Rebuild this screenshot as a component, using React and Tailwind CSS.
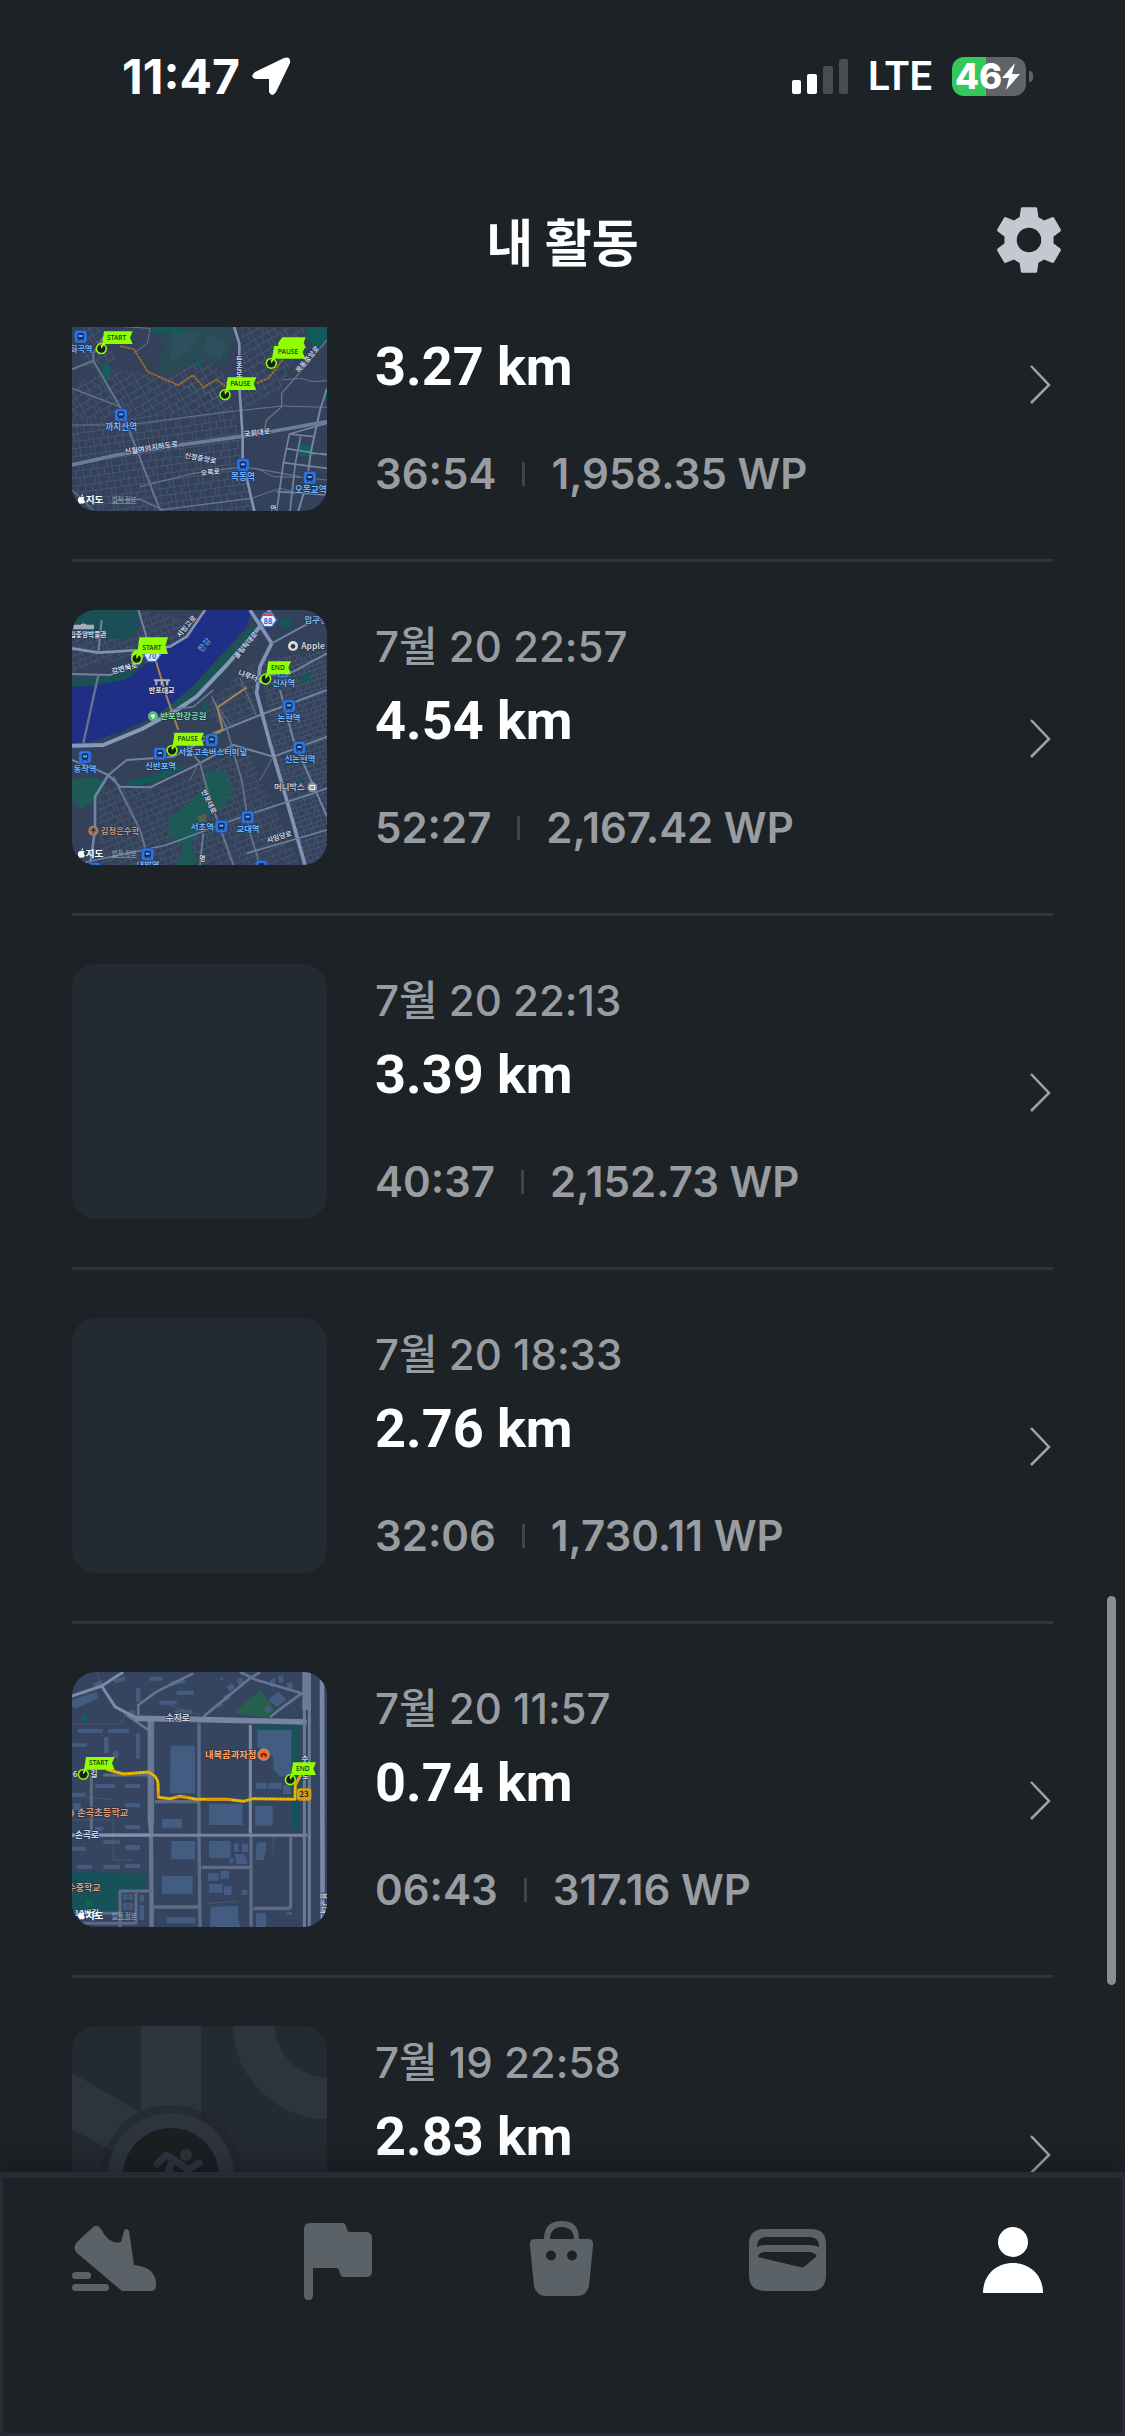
import { MdSettings } from "react-icons/md";

const MAP_FONT = '"Noto Sans CJK KR", sans-serif';

function Road({ d, w = 4, c = "#66748c" }) {
    return (
        <path
            d={d}
            fill="none"
            stroke={c}
            strokeWidth={w}
            strokeLinejoin="round"
        />
    );
}

function Label({ x, y, size = 24, fill = "#cfd9ea", rotate = 0, children }) {
    return (
        <text
            x={x}
            y={y}
            transform={`rotate(${rotate} ${x} ${y})`}
            fontSize={size}
            fontWeight="700"
            fontFamily={MAP_FONT}
            textAnchor="middle"
            fill={fill}
            stroke="#1f2b40"
            strokeWidth="3"
            paintOrder="stroke"
        >
            {children}
        </text>
    );
}

function Station({ x, y }) {
    return (
        <g transform={`translate(${x} ${y})`}>
            <rect x="-19" y="-19" width="38" height="38" rx="9" fill="#2f74dc" stroke="#1b3f86" strokeWidth="2" />
            <rect x="-10" y="-11" width="20" height="20" rx="6" fill="#12305f" />
            <rect x="-6" y="-5" width="12" height="6" fill="#6aa6f5" />
            <path d="M-8 13l4-5M8 13l-4-5" stroke="#12305f" strokeWidth="3" />
        </g>
    );
}

// The pin sits at x/y, the flag grows up and to the right of it
function Flag({ x, y, w = 88, h = 38, children }) {
    return (
        <g transform={`translate(${x} ${y})`}>
            <circle r="17" fill="#90ff00" />
            <circle r="12.5" fill="#172019" />
            <path d="M0 0L-2 -11L8 -12Z" fill="#90ff00" />
            <path
                d={`M0 0L8 ${-14 - h}H${w + 6}L${w - 2} ${-14 - h / 2}L${w + 6} -14H10Z`}
                fill="#90ff00"
            />
            <text
                x={w / 2 + 2}
                y={-27}
                fontSize="20"
                fontWeight="500"
                fontFamily='"Noto Sans", sans-serif'
                textAnchor="middle"
                fill="#17330a"
            >
                {children}
            </text>
        </g>
    );
}

function AppleMark({ x, y }) {
    return (
        <g>
            <path
                transform={`translate(${x} ${y})`}
                d="M11 6C14 3 19 4 21 7C17 10 17 15 22 18C20 24 16 27 12 24C8 27 4 24 2 19C-1 12 3 2 11 6ZM11 4C11 0 13 -2 16 -3C16 1 14 4 11 4Z"
                fill="#fff"
            />
            <text x={x + 24} y={y + 23} fontSize="29" fontWeight="700" fontFamily={MAP_FONT} fill="#fff">
                지도
            </text>
            <text
                x={x + 102}
                y={y + 21}
                fontSize="19"
                fontFamily={MAP_FONT}
                fill="#98a3b5"
                textDecoration="underline"
            >
                법적 정보
            </text>
        </g>
    );
}

function Streets({ id, size, angle, color = "#505f78" }) {
    return (
        <pattern
            id={id}
            width={size}
            height={size}
            patternUnits="userSpaceOnUse"
            patternTransform={`rotate(${angle})`}
        >
            <path
                d={`M0 1H${size}M1 0V${size}M${size / 2} 0V${size / 2}M0 ${size / 2}H${size}M${size * 0.75} ${size / 2}V${size}`}
                stroke={color}
                strokeWidth="2"
                fill="none"
            />
        </pattern>
    );
}

function MokdongMap() {
    return (
        <svg viewBox="36 -162 765 765" className="size-full">
            <defs>
                <Streets id="mokdongA" size={44} angle={-8} />
                <Streets id="mokdongB" size={46} angle={-30} />
            </defs>
            <rect x="36" y="-162" width="765" height="765" fill="#33425a" />
            <path d="M36 330L520 300L540 380L575 603H36Z" fill="url(#mokdongA)" />
            <path d="M36 220L160 180L270 190L500 240L520 300L36 330Z" fill="url(#mokdongB)" />
            <path d="M545 50H740L660 240L545 300Z" fill="url(#mokdongB)" />
            <path d="M330 200L430 140L520 220L510 290L380 240Z" fill="url(#mokdongB)" />
            <path d="M60 50H120L170 150L80 180Z" fill="url(#mokdongB)" />
            <path d="M300 50H500L520 90L500 160L430 150L330 190L290 195L310 120Z" fill="#294b56" />
            <path d="M340 70L420 60L390 120L330 160ZM440 70L500 100L480 150L430 130Z" fill="#2f5560" opacity="0.6" />
            <path d="M275 52H370L375 68L350 72L320 62L280 76ZM740 50H801V90L770 120L740 85Z" fill="#125a58" />
            <path d="M126 160L152 165L150 205L130 208ZM406 155L420 152L424 165L408 168ZM720 402L756 408L752 442L718 438ZM790 245L801 240V270L792 266Z" fill="#12605a" />
            <Road d="M36 178L100 152L100 130L130 80" w={6} />
            <Road d="M100 152L180 290L300 600" w={6} />
            <Road d="M36 345L200 345L480 308L665 288L801 292" w={3} />
            <Road d="M190 50L270 55L262 100L222 130" w={3} />
            <Road d="M801 90L700 210L665 250V290L620 330L610 370" w={4} />
            <Road d="M665 210L720 205L760 215L801 212" w={3} />
            <Road d="M36 235L180 290M300 600L575 565M36 540L100 600M170 570L240 568L310 600" w={4} />
            <Road d="M240 530L400 490L550 470L620 482L720 500" w={4} />
            <Road d="M575 565L660 535L710 548M600 480L640 500L720 502L801 510" w={3} />
            <Road d="M801 235L780 300L752 430L740 520L715 603" w={6} c="#7484a0" />
            <Road d="M801 340L688 372L670 460L650 603M688 372L760 380M676 415L800 435M670 458L801 475M722 380L706 460L690 603M756 430L801 432M650 545L801 555" w={5} c="#7484a0" />
            <Road d="M36 465L170 435L360 405L540 380L660 360L801 335" w={11} c="#6b7c9a" />
            <Road d="M522 50L538 100V230L548 380V450L575 570L583 603" w={8} c="#7f92b3" />
            <path
                d="M180 108L222 118L262 184L355 226L398 196L432 232L470 208L495 228M590 220L625 205L668 150"
                fill="none"
                stroke="#a66d24"
                strokeWidth="5"
                strokeDasharray="9 2"
            />
            <Station x={62} y={80} />
            <Station x={183} y={315} />
            <Station x={549} y={465} />
            <Station x={749} y={503} />
            <Label x={64} y={125} fill="#70b5ff">화곡역</Label>
            <Label x={184} y={360} size={26} fill="#70b5ff">까치산역</Label>
            <Label x={549} y={510} size={26} fill="#70b5ff">목동역</Label>
            <Label x={752} y={549} size={26} fill="#70b5ff">오목교역</Label>
            <Label x={275} y={421} size={22} rotate={-9}>신월여의지하도로</Label>
            <Label x={420} y={452} size={21} rotate={11}>신정중앙로</Label>
            <Label x={452} y={494} size={21} rotate={-6}>오목로</Label>
            <Label x={592} y={376} size={22} rotate={-7}>국회대로</Label>
            <Label x={538} y={155} size={21}>등</Label>
            <Label x={538} y={176} size={21}>촌</Label>
            <Label x={538} y={197} size={21}>로</Label>
            <Label x={748} y={153} size={21} rotate={-50}>목동중앙로</Label>
            <Label x={640} y={603} size={20}>안</Label>
            <path d="M655 98L667 82H737L731 98L738 115H655Z" fill="#90ff00" />
            <Flag x={124} y={116}>START</Flag>
            <Flag x={495} y={254}>PAUSE</Flag>
            <Flag x={634} y={160} w={96}>PAUSE</Flag>
            <AppleMark x={53} y={556} />
        </svg>
    );
}

function BanpoMap() {
    return (
        <svg viewBox="36 30 765 765" className="size-full">
            <defs>
                <Streets id="banpoA" size={38} angle={-22} color="#4b5b73" />
                <Streets id="banpoB" size={30} angle={-18} color="#4d5c75" />
            </defs>
            <rect x="36" y="30" width="765" height="765" fill="#33425a" />
            <path d="M36 30H240L380 60L340 130L36 220Z" fill="url(#banpoA)" />
            <path d="M110 560L330 560L420 500L560 440L720 795H120Z" fill="url(#banpoA)" />
            <path d="M600 180L801 150V795H730L640 450Z" fill="url(#banpoB)" />
            <path d="M420 330L590 180L590 350L500 390Z" fill="url(#banpoA)" />
            <path d="M36 30H235L240 85L200 120L100 110L60 70L36 75ZM36 235L150 225L250 200L200 240L100 260L36 262Z" fill="#1b4f56" />
            <path d="M440 30H575L560 80L480 170L400 260L300 340L180 400L100 425L36 430V260L100 258L200 238L300 160L380 110Z" fill="#1f2f86" />
            <path d="M575 75L600 90L500 210L420 290L340 330L260 360L150 410L80 428L200 390L300 340L400 258L480 168Z" fill="#1d5354" />
            <path d="M36 540L90 530L140 545L110 600L60 628L36 600ZM440 515L490 510L520 570L500 610L430 660L395 730L410 795H350L370 740L320 700L330 650L400 600L430 560Z" fill="#1e5a55" />
            <path d="M200 545L270 530L360 495L380 500L280 548L190 560ZM425 320L445 300L440 335ZM720 235L750 215L755 235L725 250ZM660 60L690 55L695 80L665 80ZM710 540L728 535L725 555ZM535 690L580 670L570 690L540 705Z" fill="#125a58" />
            <path d="M410 650L440 640L440 660L420 668Z" fill="#53604f" />
            <Road d="M36 145L115 158L240 150L330 140L380 110L435 30" w={8} c="#8292b0" />
            <Road d="M36 222L150 225L240 190L265 130L235 30M125 60L115 158" w={6} c="#72829f" />
            <Road d="M115 225L70 430" w={7} />
            <Road d="M36 437L130 435L250 385L350 330L410 290L500 195L600 80L630 30" w={12} c="#8799b8" />
            <Road d="M330 330L400 320L460 270" w={5} />
            <Road d="M36 480L100 505L145 525L200 480L340 470L500 385L600 345L801 270" w={6} c="#7282a0" />
            <Road d="M145 525L105 590V690L90 795" w={8} c="#7282a0" />
            <Road d="M145 525L180 560L270 562L400 500L520 435L640 470L801 410" w={6} c="#7282a0" />
            <Road d="M160 530L240 690L270 795M340 400L370 420L420 490L450 600L520 795" w={6} />
            <Road d="M570 30L635 130L600 200L590 280L630 430L680 600L735 795" w={11} c="#8193b5" />
            <Road d="M635 130L801 40M600 230L700 215L801 160M660 270L700 420L801 650" w={6} c="#7080a0" />
            <Road d="M455 290L500 385L545 540L570 700L600 795" w={5} />
            <Road d="M36 795L320 735L560 645L760 580L801 565M560 760L801 690M430 700L420 795" w={5} c="#7080a0" />
            <Road d="M420 480L390 540M460 300L520 385M540 235L590 350M640 470L600 540" w={3} />
            <path d="M275 140L320 290L355 390M430 412L488 388L472 322L560 262" fill="none" stroke="#a58355" strokeWidth="6" />
            <path d="M600 60L612 38H636L650 60L636 80H612Z" fill="#e9eef8" stroke="#356bd0" strokeWidth="4" />
            <path d="M610 40H638V48H606Z" fill="#d84545" />
            <text x="624" y="71" fontSize="23" fontWeight="700" fontFamily={MAP_FONT} textAnchor="middle" fill="#2f62c8">
                88
            </text>
            <path d="M252 165L262 148H290L302 165L288 185H264Z" fill="#dce6f6" stroke="#356bd0" strokeWidth="4" />
            <text x="276" y="176" fontSize="22" fontWeight="700" fontFamily={MAP_FONT} textAnchor="middle" fill="#2f62c8">
                70
            </text>
            <path d="M40 74H60L70 70L82 74H102V88H40Z" fill="#a7adb8" />
            <path d="M282 238H330V244H325V256H318V244H308V256H302V244H292V256H286V244H282Z" fill="#aeb2b8" />
            <Label x={75} y={110} size={20} fill="#dce2ee">국립중앙박물관</Label>
            <Label x={305} y={278} size={21} fill="#e1e5ee">반포대교</Label>
            <Label x={196} y={212} size={22} rotate={-14}>강변북로</Label>
            <Label x={385} y={84} size={21} rotate={-50}>서빙고로</Label>
            <Label x={440} y={140} size={25} rotate={-52} fill="#4c93f0">한강</Label>
            <Label x={563} y={140} size={21} rotate={-50}>올림픽대로</Label>
            <Label x={571} y={238} size={22} rotate={20}>나루터로</Label>
            <Label x={768} y={70} size={25} fill="#70b5ff">압구정</Label>
            <circle cx="699" cy="138" r="15" fill="#d7d9dd" />
            <circle cx="699" cy="139" r="7" fill="#34363b" />
            <Label x={759} y={147} size={25} fill="#cbd0da">Apple</Label>
            <circle cx="279" cy="349" r="15" fill="#57be77" />
            <path d="M272 350a7 7 0 1 1 14 0H281V357H277V350Z" fill="#e8fff0" />
            <Label x={370} y={358} size={25} fill="#79dda0">반포한강공원</Label>
            <Station x={668} y={215} />
            <Station x={687} y={318} />
            <Station x={718} y={443} />
            <Station x={75} y={471} />
            <Station x={300} y={461} />
            <Station x={455} y={420} />
            <Station x={484} y={679} />
            <Station x={563} y={652} />
            <Station x={263} y={763} />
            <Station x={604} y={800} />
            <Station x={103} y={806} />
            <Label x={671} y={257} size={25} fill="#70b5ff">신사역</Label>
            <Label x={687} y={362} size={25} fill="#70b5ff">논현역</Label>
            <Label x={720} y={487} size={25} fill="#70b5ff">신논현역</Label>
            <Label x={75} y={515} size={25} fill="#70b5ff">동작역</Label>
            <Label x={302} y={506} size={25} fill="#70b5ff">신반포역</Label>
            <Label x={458} y={464} size={25} fill="#70b5ff">서울고속버스터미널</Label>
            <Label x={427} y={690} size={25} fill="#70b5ff">서초역</Label>
            <Label x={564} y={696} size={25} fill="#70b5ff">교대역</Label>
            <Label x={264} y={804} size={25} fill="#70b5ff">내방역</Label>
            <Label x={688} y={571} size={25} fill="#c4c6cb">머니박스</Label>
            <circle cx="757" cy="562" r="15" fill="#8b8d92" />
            <rect x="750" y="556" width="14" height="12" fill="none" stroke="#fff" strokeWidth="3" />
            <circle cx="100" cy="692" r="15" fill="#a87c67" />
            <path d="M92 692H108M100 683V701M94 687H106" stroke="#3a2a25" strokeWidth="3" />
            <Label x={180} y={701} size={25} fill="#cf9a80">김정은수학</Label>
            <Label x={440} y={608} size={21} rotate={65}>반포대로</Label>
            <Label x={660} y={718} size={21} rotate={-17}>사임당로</Label>
            <Label x={427} y={784} size={20}>명</Label>
            <circle cx="231" cy="168" r="17" fill="#90ff00" />
            <Flag x={230} y={176} w={88} h={50}>START</Flag>
            <Flag x={617} y={237} w={70} h={39}>END</Flag>
            <Flag x={336} y={451} w={90} h={39}>PAUSE</Flag>
            <AppleMark x={53} y={748} />
        </svg>
    );
}

function SujiMap() {
    return (
        <svg viewBox="36 36 765 765" className="size-full">
            <rect x="36" y="36" width="765" height="765" fill="#35455f" />
            <path d="M520 160L600 90L645 150L620 172Z" fill="#26614f" />
            <path d="M578 198H718V510H696V230L578 208Z" fill="#17525a" />
            <path d="M36 632L256 642V690L175 700V755H36Z" fill="#17525a" />
            <path d="M64 166H81V182H64ZM78 720H100V740H78Z" fill="#0b6650" />
            <g fill="#435d82">
                <path d="M36 120L110 95L115 115L50 145L36 140ZM54 207H128V218H54ZM144 207H208V218H144ZM132 232H146V280H132ZM228 220H240V296H228ZM228 85H242V125H228Z" />
                <path d="M100 70L125 60L125 75L105 80ZM160 60L195 48L195 62L165 70ZM268 50H308V62H268ZM330 65L375 55V68L335 78ZM350 92H402V104H350ZM298 122H350V134H298ZM190 155L225 150V164L192 166ZM345 150H395V162H345Z" />
                <path d="M36 250H80V260H36ZM158 275L175 272V292L160 295ZM106 372H164V384H106ZM196 372H240V384H196ZM36 398H78V410H36ZM40 430H62V450H40ZM196 430H240V442H196ZM105 500H130V512H105ZM196 495H240V508H196Z" />
                <path d="M332 257H405V400H330ZM306 477H366V503H306ZM447 432H548V495H447ZM585 438H638V497H585ZM592 210H694V345L660 350L640 330V290L592 260ZM588 368H620V386H588ZM625 368H665V386H625ZM670 375H692V402H670Z" />
                <path d="M334 543H405V598H334ZM447 543H512V594H447ZM306 648H398V702H306ZM590 548L618 545V570L610 600H586ZM522 550H536V575H522ZM546 552H564V576H546ZM508 595H520V610H508ZM524 582H552L564 612H530Z" />
                <path d="M444 640H476V662H444ZM481 633H507V656H481ZM447 672H488V698H447ZM492 678H514V705H492ZM545 690H562V704H545ZM452 740L534 738V775L542 801H450ZM588 760H618V801H588ZM680 755H696V765H680ZM321 772H406V790H321Z" />
                <path d="M190 702H202V720H190ZM206 702H218V720H206ZM190 728H202V750H190ZM206 728H218V750H206ZM238 705H252V725H238ZM238 735H252V780H238ZM36 560H78V572H36ZM130 541H180V552H130ZM196 555H240V570H196ZM50 615H96V626H50ZM130 615H180V626H130ZM196 612H240V624H196Z" />
                <path d="M478 55L490 50L488 65ZM500 80L515 70L525 85L508 95ZM530 60L545 52L552 66L538 76ZM490 110L505 100L512 115L496 125ZM470 130L482 122L490 135L476 144ZM625 120L655 95L680 120L650 140ZM630 60L645 55V80H630ZM655 50L668 45L672 66L658 70ZM680 70L695 65L700 85L685 90ZM612 145L625 135L636 150L622 160Z" />
            </g>
            <Road d="M36 192H180L200 160M110 36L125 75M310 130L420 165M150 350L270 345M36 480H160V600H220M80 410L160 420M640 530V585M440 730L530 725" w={2} c="#51617b" />
            <Road d="M94 345V520M130 345H265" w={9} c="#5c6b84" />
            <Road d="M235 165V135L290 95L400 40M430 170L570 55L600 36M540 36L590 60L725 100L650 155L630 172M200 165L265 210" w={8} c="#66758e" />
            <Road d="M36 108L125 78L190 36M125 78L165 140L225 172L265 180" w={9} c="#7b8ba7" />
            <Road d="M276 178V480L273 530L275 801" w={13} c="#66758e" />
            <Road d="M269 180V480L273 520" w={12} c="#6c7b94" />
            <Road d="M417 190V530L420 801M573 520V801M285 425H420M425 622H573M275 741H420M580 745H685Q692 745 692 735V530" w={10} c="#5d6c85" />
            <Road d="M571 195V520" w={9} c="#7b8ba7" />
            <Road d="M180 801V693H275M228 700V790H36M36 760H180" w={9} c="#5c6b84" />
            <Road d="M225 175L400 178L740 186" w={17} c="#76869f" />
            <Road d="M36 525L400 526H742" w={9} c="#7484a0" />
            <Road d="M733 36V801M748 36V801" w={9} c="#6c7b94" />
            <Road d="M740 36V150" w={26} c="#6c7b94" />
            <Road d="M786 60L788 801" w={14} c="#7787a5" />
            <Road d="M36 526L270 525" w={9} c="#8292ae" />
            <path
                d="M140 328L190 342L265 336Q292 348 294 370L295 412L330 416L360 409L410 418L500 418L550 424L580 416L705 418L706 375L722 345"
                fill="none"
                stroke="#dda900"
                strokeWidth="9"
                strokeLinejoin="round"
            />
            <path
                d="M140 328L190 342L265 336Q292 348 294 370L295 412L330 416L360 409L410 418L500 418L550 424L580 416L705 418L706 375"
                fill="none"
                stroke="#f5cc00"
                strokeWidth="4"
                strokeDasharray="6 5"
            />
            <path d="M345 412L385 412M440 419L515 419M294 395V410" stroke="#e58a12" strokeWidth="6" />
            <Label x={353} y={182} size={26}>수지로</Label>
            <Label x={512} y={295} size={28} fill="#ffa66a">내복곰과자점</Label>
            <circle cx="611" cy="284" r="17" fill="#ea6b2c" stroke="#ffb07c" strokeWidth="2" />
            <path d="M602 290V283Q611 274 620 283V290H614V284H608V290Z" fill="#5a220b" />
            <Label x={45} y={352} size={24}>6</Label>
            <Label x={102} y={352} size={24}>길</Label>
            <Label x={735} y={306} size={24}>수</Label>
            <Label x={737} y={357} size={24}>로</Label>
            <circle cx="30" cy="459" r="13" fill="#b67b5e" />
            <Label x={128} y={469} size={28} fill="#dc9d7c">손곡초등학교</Label>
            <Label x={81} y={533} size={26}>손곡로</Label>
            <Label x={72} y={694} size={27} fill="#dc9d7c">수중학교</Label>
            <Label x={80} y={767} size={24}>19번길</Label>
            <Label x={783} y={740} size={23} rotate={90}>용구대로</Label>
            <rect x="711" y="385" width="43" height="37" rx="7" fill="#d09d1d" />
            <text x="732" y="412" fontSize="24" fontWeight="600" fontFamily={MAP_FONT} textAnchor="middle" fill="#3a2c0a">
                23
            </text>
            <Flag x={70} y={343}>START</Flag>
            <Flag x={691} y={359} w={71}>END</Flag>
            <AppleMark x={53} y={753} />
        </svg>
    );
}

function DefaultThumb() {
    return (
        <svg viewBox="0 0 255 255" className="size-full">
            <rect width="255" height="255" fill="#242a32" />
            <path d="M69 0H129V150H69ZM0 47L110 109V163L0 103Z" fill="#2d343e" />
            <circle cx="255" cy="-1" r="73" fill="none" stroke="#2d343e" strokeWidth="42" />
            <circle cx="99" cy="150" r="71" fill="#1f242b" opacity="0.5" />
            <circle cx="99" cy="150" r="63" fill="#2d343e" />
            <circle cx="99" cy="150" r="48" fill="#1a1f22" />
            <circle cx="114" cy="129" r="6" fill="#2d343e" />
            <path
                d="M85 138L94 129L103 134L116 144L127 137M101 133L96 146L108 152"
                fill="none"
                stroke="#2d343e"
                strokeWidth="7"
                strokeLinecap="round"
                strokeLinejoin="round"
            />
        </svg>
    );
}

const activities = [
    { id: 1, distance: "3.27 km", time: "36:54", points: "1,958.35 WP", Thumb: MokdongMap },
    { id: 2, date: "7월 20 22:57", distance: "4.54 km", time: "52:27", points: "2,167.42 WP", Thumb: BanpoMap },
    { id: 3, date: "7월 20 22:13", distance: "3.39 km", time: "40:37", points: "2,152.73 WP" },
    { id: 4, date: "7월 20 18:33", distance: "2.76 km", time: "32:06", points: "1,730.11 WP" },
    { id: 5, date: "7월 20 11:57", distance: "0.74 km", time: "06:43", points: "317.16 WP", Thumb: SujiMap },
    { id: 6, date: "7월 19 22:58", distance: "2.83 km", Thumb: DefaultThumb },
];

function ActivityRow({ activity }) {
    const { date, distance, time, points, Thumb } = activity;

    return (
        <li className="border-b-3 border-[#2c343e] py-12">
            <a href="#activity" className="flex items-center gap-12">
                <div className="size-[255px] shrink-0 overflow-hidden rounded-3xl bg-[#242a32]">
                    {Thumb && <Thumb />}
                </div>
                <div className="flex h-[255px] min-w-0 flex-1 flex-col py-[13px] text-[42px] leading-[48px] font-semibold text-[#999da1]">
                    <p className="h-12 font-medium">{date}</p>
                    <p className="mt-[18px] font-[Roboto] text-[54px] leading-[64px] font-bold text-white">
                        {distance}
                    </p>
                    {time && (
                        <div className="mt-auto flex items-center gap-[26px]">
                            <span>{time}</span>
                            <span className="h-6 w-[3px] bg-[#3f454b]" />
                            <span>{points}</span>
                        </div>
                    )}
                </div>
                <svg viewBox="0 0 24 40" className="h-10 w-6 shrink-0" fill="none">
                    <path d="M2 2L20 21L2 39" stroke="#a0a4a8" strokeWidth="2.5" />
                </svg>
            </a>
        </li>
    );
}

function StatusBar() {
    return (
        <div className="flex h-[153px] items-center justify-between pr-[92px] pl-[122px] font-semibold text-white">
            <div className="flex items-center gap-3">
                <span className="text-[48px] leading-[48px] font-bold">11:47</span>
                <svg viewBox="0 0 39 39" className="size-[39px]">
                    <path
                        d="M3 15L32 1Q39 -1 38 6L24 35Q20 41 17 35V22H4Q-3 20 3 15Z"
                        fill="#fff"
                    />
                </svg>
            </div>
            <div className="flex items-center gap-5">
                <svg viewBox="0 0 56 35" className="h-[35px] w-14">
                    <rect y="21" width="9" height="14" rx="2" fill="#fff" />
                    <rect x="15" y="15" width="10" height="20" rx="2" fill="#fff" />
                    <rect x="31" y="7" width="10" height="28" rx="2" fill="#484d51" />
                    <rect x="47" width="9" height="35" rx="2" fill="#484d51" />
                </svg>
                <span className="font-[Roboto] text-[40px] leading-[40px]">LTE</span>
                <div className="flex items-center gap-[3px]">
                    <div className="flex h-[39px] w-[74px] items-center rounded-xl bg-linear-to-r from-[#34c759] from-46% to-[#606468] to-46% pl-[3px]">
                        <span className="text-[35px] leading-[39px] font-extrabold">46</span>
                        <svg viewBox="0 0 18 27" className="h-[27px] w-[18px]">
                            <path d="M13 0L0 15H7L4 27L18 11H10Z" fill="#fff" />
                        </svg>
                    </div>
                    <span className="h-[11px] w-1 rounded-r-full bg-[#606468]" />
                </div>
            </div>
        </div>
    );
}

function ShoeIcon() {
    return (
        <>
            <path d="M9 27L24 13Q29 8 33 14Q41 30 53 27L56 16Q58 12 61 16L66 50Q87 52 88 68V71Q88 76 83 76H54L9 38Q4 33 9 27Z" />
            <rect x="4" y="57" width="19" height="7" rx="3.5" />
            <rect x="4" y="69" width="37" height="7" rx="3.5" />
        </>
    );
}

function FlagIcon() {
    return (
        <path d="M17 8H49Q52 8 53 11L54 15Q55 17 57 17H73Q79 17 79 23V56Q79 62 73 62H51Q48 62 47 59L46 55Q45 53 43 53H20V80Q20 85 15.500 85Q11 85 11 80V14Q11 8 17 8Z" />
    );
}

function BagIcon() {
    return (
        <path
            fillRule="evenodd"
            d="M26 24C26 11 33 6 44 6S61 11 61 24H70Q76 24 75 31L71 71Q69 81 58 81H29Q18 81 16 71L12 31Q11 24 17 24ZM32 24H56C56 16 51 12 44 12S32 16 32 24ZM33 35.500A5 5 0 1 0 33 45.500A5 5 0 1 0 33 35.500ZM54 35.500A5 5 0 1 0 54 45.500A5 5 0 1 0 54 35.500Z"
        />
    );
}

function WalletIcon() {
    return (
        <path
            fillRule="evenodd"
            d="M22 14H68Q83 14 83 29V60Q83 76 68 76H22Q6 76 6 60V29Q6 14 22 14ZM14 32Q18 30 22 30H66Q72 30 76 32Q76 22 67 22H23Q14 22 14 32ZM15 42L57 52Q60 53 62 51L74 41Q71 37 66 37H22Q16 37 15 42Z"
        />
    );
}

function UserIcon() {
    return (
        <>
            <circle cx="45" cy="27" r="15" />
            <path d="M15 78C15 60 28 48 45 48S75 60 75 78Z" />
        </>
    );
}

const tabs = [
    { label: "Move", Icon: ShoeIcon },
    { label: "Challenge", Icon: FlagIcon },
    { label: "Shop", Icon: BagIcon },
    { label: "Wallet", Icon: WalletIcon },
    { label: "My", Icon: UserIcon, active: true },
];

function TabBar() {
    return (
        <nav className="relative grid h-[264px] shrink-0 grid-cols-5 items-start border-t-3 border-[#262b35] bg-[#1d2226] pt-10 shadow-[0_-6px_24px_rgba(0,0,0,0.25)] inset-ring-3 inset-ring-[#262b35]">
            {tabs.map(({ label, Icon, active }) => (
                <button
                    key={label}
                    type="button"
                    aria-label={label}
                    className={active ? "flex justify-center text-white" : "flex justify-center text-[#5a6167]"}
                >
                    <svg viewBox="0 0 90 90" className="size-[90px]" fill="currentColor">
                        <Icon />
                    </svg>
                </button>
            ))}
        </nav>
    );
}

export default function App() {
    return (
        <div className="flex h-screen flex-col bg-[#1d2226] font-[Inter,'Noto_Sans_CJK_KR',sans-serif]">
            <header className="shrink-0">
                <StatusBar />
                <div className="grid h-[174px] grid-cols-[1fr_auto_1fr] items-center px-[55px]">
                    <h1 className="col-start-2 font-['Noto_Sans_CJK_KR',sans-serif] text-[51px] leading-[60px] font-bold text-white">
                        내 활동
                    </h1>
                    <button type="button" aria-label="Settings" className="justify-self-end text-[#c5c8d0]">
                        <MdSettings className="size-[82px]" />
                    </button>
                </div>
            </header>
            <main className="relative min-h-0 flex-1 overflow-hidden px-[72px]">
                {/* list is scrolled part way past its first row */}
                <ul className="-mt-[119px]">
                    {activities.map((activity) => (
                        <ActivityRow key={activity.id} activity={activity} />
                    ))}
                </ul>
                <div className="absolute top-[1269px] right-[9px] h-[389px] w-[9px] rounded-full bg-[#8b8e91]" />
            </main>
            <TabBar />
        </div>
    );
}
